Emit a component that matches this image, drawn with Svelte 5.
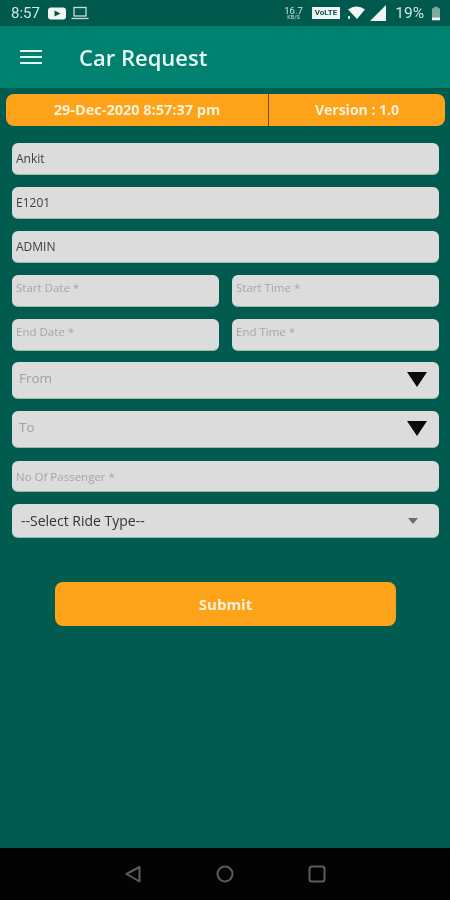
<script>
  let dateText = '29-Dec-2020 8:57:37 pm';
  let version = 'Version : 1.0';
</script>

<div class="screen">
  <div class="status">
    <span class="clock">8:57</span>
    <svg class="yt" width="18" height="13" viewBox="0 0 18 13"><rect x="0" y="0.5" width="18" height="12" rx="3" fill="#f2f5f4"/><path d="M6.5 3.5 L12.5 6.5 L6.5 9.5 Z" fill="#00594d"/></svg>
    <svg class="laptop" width="18" height="14" viewBox="0 0 18 14" fill="none" stroke="#c9dcd8" stroke-width="1.3"><rect x="3" y="1.5" width="12" height="8.5"/><path d="M0.5 12.5 H17.5"/></svg>
    <span class="spacer"></span>
    <span class="speed"><b>16.7</b><i>KB/S</i></span>
    <span class="volte">VoLTE</span>
    <svg class="wifi" width="19" height="14" viewBox="0 0 19 14"><path d="M1 3.5 Q9.5 -2.5 18 3.5 L10 13 Z" fill="#f2f5f4"/><rect x="1" y="10" width="2" height="3" fill="#c9dcd8"/></svg>
    <svg class="signal" width="16" height="16" viewBox="0 0 16 16"><path d="M16 0 V16 H0 Z" fill="#f2f5f4"/></svg>
    <span class="pct">19%</span>
    <svg class="batt" width="8" height="15" viewBox="0 0 9 15"><path d="M2.5 0 H6.5 V1.5 H9 V15 H0 V1.5 H2.5 Z" fill="#7fa89f"/><rect y="12" width="9" height="3" fill="#f2f5f4"/></svg>
  </div>

  <header class="appbar">
    <svg class="menu" width="22" height="16" viewBox="0 0 22 16" fill="none" stroke="#e6f4f1" stroke-width="2.2"><path d="M0 2 H22 M0 8 H22 M0 14 H22"/></svg>
    <h1>Car Request</h1>
  </header>

  <main class="content">
    <div class="infobar">
      <div class="date">{dateText}</div>
      <div class="version">{version}</div>
    </div>

    <div class="form">
      <div class="field filled">Ankit</div>
      <div class="field filled">E1201</div>
      <div class="field filled">ADMIN</div>
      <div class="pair">
        <div class="field hint">Start Date *</div>
        <div class="field hint">Start Time *</div>
      </div>
      <div class="pair">
        <div class="field hint">End Date *</div>
        <div class="field hint">End Time *</div>
      </div>
      <div class="field place first">
        <span>From</span>
        <svg width="20" height="15" viewBox="0 0 20 15"><path d="M0 0 H20 L10 15 Z" fill="#0a0a0a"/></svg>
      </div>
      <div class="field place">
        <span>To</span>
        <svg width="20" height="15" viewBox="0 0 20 15"><path d="M0 0 H20 L10 15 Z" fill="#0a0a0a"/></svg>
      </div>
      <div class="field hint passenger">No Of Passenger *</div>
      <div class="field ride">
        <span>--Select Ride Type--</span>
        <svg width="10" height="6" viewBox="0 0 10 6"><path d="M0 0 H10 L5 6 Z" fill="#6d6d6d"/></svg>
      </div>
    </div>

    <button class="submit">Submit</button>
  </main>

  <nav class="navbar">
    <svg width="18" height="18" viewBox="0 0 18 18" fill="none" stroke="#5c5c5c" stroke-width="2" stroke-linejoin="round"><path d="M15.5 2 V16.5 L2.5 9 Z"/></svg>
    <svg width="18" height="18" viewBox="0 0 18 18" fill="none" stroke="#5c5c5c" stroke-width="2"><circle cx="9" cy="9" r="7.5"/></svg>
    <svg width="18" height="18" viewBox="0 0 18 18" fill="none" stroke="#5c5c5c" stroke-width="2"><rect x="1.5" y="1.5" width="15" height="15" rx="2.5"/></svg>
  </nav>
</div>

<style>
  :global(body) {
    margin: 0;
    background: #015b4e;
  }
  .screen {
    width: 450px;
    height: 900px;
    display: flex;
    flex-direction: column;
    font-family: "Open Sans", "Noto Sans", sans-serif;
    overflow: hidden;
    filter: blur(0.4px);
  }
  .status {
    height: 26px;
    background: #00594d;
    display: flex;
    align-items: center;
    padding: 0 10px 0 11px;
    color: #d5e4e1;
    box-sizing: border-box;
  }
  .clock {
    font-size: 15px;
    font-family: Roboto, sans-serif;
    margin-right: 8px;
  }
  .laptop {
    margin-left: 5px;
  }
  .spacer {
    flex: 1;
  }
  .speed {
    display: flex;
    flex-direction: column;
    align-items: center;
    font-family: Roboto, sans-serif;
    line-height: 1;
    margin-right: 9px;
  }
  .speed b {
    font-size: 9.5px;
    font-weight: 400;
  }
  .speed i {
    font-size: 5.5px;
    font-style: normal;
  }
  .volte {
    background: #f2f5f4;
    color: #00594d;
    font-family: Roboto, sans-serif;
    font-size: 8px;
    font-weight: 700;
    padding: 1px 3px;
    line-height: 10px;
    margin-right: 7px;
  }
  .wifi {
    margin-right: -3px;
  }
  .signal {
    margin-left: 7px;
  }
  .pct {
    font-family: Roboto, sans-serif;
    font-size: 15.5px;
    margin: 0 8px 0 9px;
  }
  .appbar {
    height: 62px;
    background: #00806f;
    display: flex;
    align-items: center;
    padding-left: 20px;
    box-sizing: border-box;
  }
  .menu {
    margin-right: 37px;
  }
  h1 {
    margin: 0;
    font-size: 22px;
    font-weight: 600;
    color: #e8f6f3;
  }
  .content {
    flex: 1;
    background: #015b4e;
    padding-top: 6px;
    display: flex;
    flex-direction: column;
  }
  .infobar {
    margin: 0 5px 0 6px;
    height: 32px;
    background: #fca31a;
    border-radius: 8px;
    display: flex;
    color: #fdf1d8;
    font-size: 14.5px;
    font-weight: 700;
    line-height: 32px;
    text-align: center;
  }
  .date {
    width: 262px;
    border-right: 1px solid #7a4a10;
  }
  .version {
    flex: 1;
    font-size: 14px;
  }
  .form {
    margin: 17px 11px 0 12px;
    display: flex;
    flex-direction: column;
    gap: 12px;
  }
  .pair {
    display: grid;
    grid-template-columns: 207px 207px;
    justify-content: space-between;
  }
  .field {
    height: 32px;
    box-sizing: border-box;
    background: #dcdcdc;
    border-radius: 6px;
    padding-left: 4px;
    font-size: 12px;
    line-height: 31px;
    border-bottom: 1px solid #9fb5af;
  }
  .filled {
    color: #3f3f3f;
  }
  .hint {
    color: #a6a6a6;
    font-size: 11.5px;
    line-height: 26px;
  }
  .passenger {
    height: 31px;
    line-height: 31px;
    margin-top: 1px;
  }
  .place {
    height: 37px;
    display: flex;
    align-items: center;
    justify-content: space-between;
    padding: 0 12px 0 7px;
    color: #a0a0a0;
    font-size: 13.5px;
    line-height: 1;
  }
  .place span {
    margin-bottom: 2px;
  }
  .place svg {
    margin-bottom: 2px;
  }
  .first {
    margin-top: -1px;
  }
  .ride {
    height: 34px;
    display: flex;
    align-items: center;
    justify-content: space-between;
    padding: 0 21px 0 9px;
    color: #333;
    font-size: 14px;
    line-height: 1;
  }
  .submit {
    align-self: flex-start;
    margin: 44px 0 0 55px;
    width: 341px;
    height: 44px;
    border: none;
    border-radius: 8px;
    background: #fca31a;
    color: #fdf1d8;
    font-family: inherit;
    font-size: 15px;
    font-weight: 700;
  }
  .navbar {
    height: 52px;
    background: #030303;
    display: grid;
    grid-template-columns: 18px 18px 18px;
    justify-content: center;
    column-gap: 74px;
    align-items: center;
  }
</style>
